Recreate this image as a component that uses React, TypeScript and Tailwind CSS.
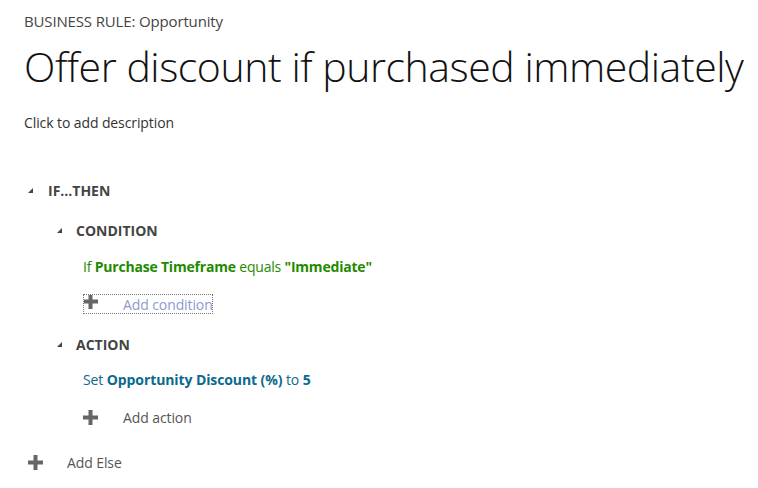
import React from "react";

const Tri = () => (
  <svg width="5" height="5" viewBox="0 0 5 5" className="shrink-0 -mt-[1px]">
    <polygon points="5,0 5,5 0,5" fill="#444" />
  </svg>
);

const Plus = ({ className = "" }: { className?: string }) => (
  <svg width="15" height="15" viewBox="0 0 15 15" className={"shrink-0 " + className}>
    <rect x="5.5" y="0" width="4" height="15" fill="#666" />
    <rect x="0" y="5.5" width="15" height="4" fill="#666" />
  </svg>
);

export default function App() {
  return (
    <div
      className="w-[758px] h-[488px] bg-white overflow-hidden text-[#333]"
      style={{ fontFamily: '"Open Sans", "Noto Sans", sans-serif' }}
    >
      <div className="pl-[24px] pt-[11px]">
        <div className="text-[15px] leading-[20px] text-[#444] tracking-[-0.15px]">BUSINESS RULE: Opportunity</div>
        <div className="mt-[11px] text-[41px] leading-[48px] font-light text-[#111] tracking-[-0.45px]">
          Offer discount if purchased immediately
        </div>
        <div className="mt-[23px] text-[14px] leading-[20px] text-[#333] tracking-[-0.1px]">Click to add description</div>
      </div>

      <div className="mt-[48px] pl-[28px] text-[14px] leading-[20px]">
        <div className="flex items-center h-[20px]">
          <Tri />
          <span className="ml-[15px] font-bold text-[#444]">IF...THEN</span>
        </div>

        <div className="pl-[29px] mt-[20px]">
          <div className="flex items-center h-[20px]">
            <Tri />
            <span className="ml-[14px] font-bold text-[#444]">CONDITION</span>
          </div>
          <div className="pl-[26px] mt-[16px] h-[20px] flex items-center text-[#1f8a00] tracking-[-0.2px]">
            <span>If&nbsp;</span>
            <span className="font-bold">Purchase Timeframe</span>
            <span>&nbsp;equals&nbsp;</span>
            <span className="font-bold">"Immediate"</span>
          </div>
          <div className="pl-[26px] mt-[17px] h-[20px]">
            <div className="flex items-start w-[130px] h-[20px] border border-dotted border-[#777] overflow-hidden">
              <Plus className="-mt-[1px] -ml-[1px]" />
              <span className="ml-[25px] text-[#8d9bcc] tracking-[-0.1px] whitespace-nowrap">Add condition</span>
            </div>
          </div>

          <div className="flex items-center h-[20px] mt-[21px]">
            <Tri />
            <span className="ml-[14px] font-bold text-[#444]">ACTION</span>
          </div>
          <div className="pl-[26px] mt-[15px] h-[20px] flex items-center text-[#0b6a8c] tracking-[-0.1px]">
            <span>Set&nbsp;</span>
            <span className="font-bold">Opportunity Discount (%)</span>
            <span>&nbsp;to&nbsp;</span>
            <span className="font-bold">5</span>
          </div>
          <div className="pl-[26px] mt-[18px] flex items-start h-[20px]">
            <Plus className="mt-[2px]" />
            <span className="ml-[25px] text-[#555] tracking-[-0.1px]">Add action</span>
          </div>
        </div>

        <div className="mt-[25px] flex items-start h-[20px]">
          <Plus className="mt-[2px]" />
          <span className="ml-[24px] text-[#555] tracking-[-0.1px]">Add Else</span>
        </div>
      </div>
    </div>
  );
}
